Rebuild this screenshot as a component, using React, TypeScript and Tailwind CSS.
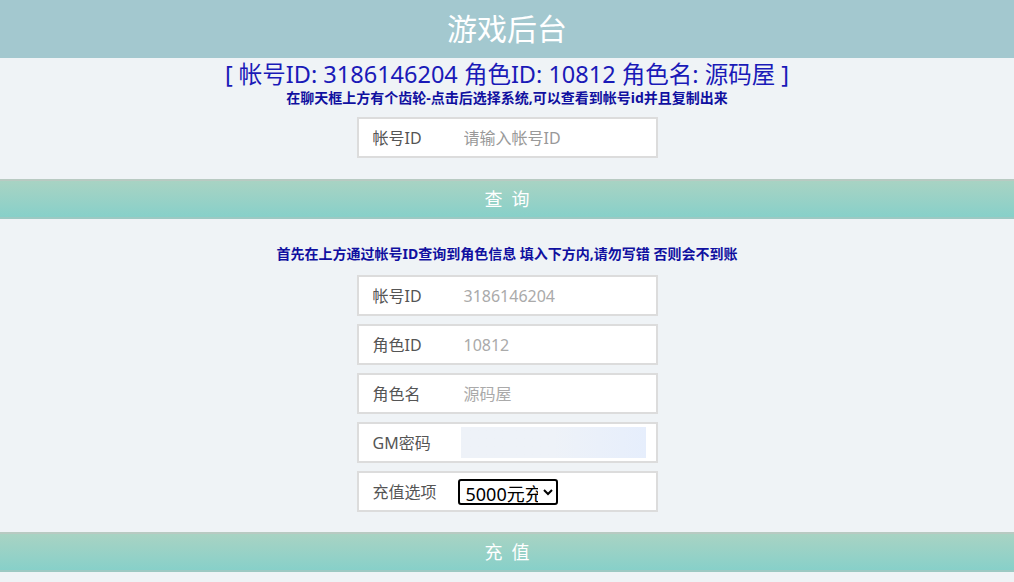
import React, { useState } from 'react';

const font = { fontFamily: '"Noto Sans", "Noto Sans CJK SC", sans-serif' };

const Field: React.FC<{ label: string; children: React.ReactNode }> = ({ label, children }) => (
  <div className="w-[301px] h-[41px] mx-auto bg-white border-2 border-[#dcdcdc] flex items-center">
    <span className="w-[105px] pl-[14px] text-[16px] text-[#555]">{label}</span>
    <div className="flex-1 flex items-center h-full">{children}</div>
  </div>
);

const Band: React.FC<{ text: string }> = ({ text }) => (
  <button className="w-full h-[40px] border-t-2 border-b-2 border-t-[#b8cac2] border-b-[#9cc9c3] bg-gradient-to-b from-[#a8d3c3] to-[#87d0c9] text-white text-[18px] tracking-[0.5em] pl-[0.5em]">
    {text}
  </button>
);

const App: React.FC = () => {
  const [account, setAccount] = useState('');
  const [option, setOption] = useState('5000');

  return (
    <div className="min-h-[582px] bg-[#eff3f6]" style={font}>
      <div className="h-[58px] bg-[#a3c8cf] flex items-center justify-center">
        <h1 className="text-white text-[30px] leading-none">游戏后台</h1>
      </div>

      <div className="text-center text-[#1a1ab8] pt-[2px]">
        <p className="text-[23.5px] leading-[28px]">[ 帐号ID: 3186146204 角色ID: 10812 角色名: 源码屋 ]</p>
        <p className="text-[14px] font-bold leading-[20px] text-[#1010a0]">在聊天框上方有个齿轮-点击后选择系统,可以查看到帐号id并且复制出来</p>
      </div>

      <div className="mt-[9px]">
        <Field label="帐号ID">
          <input
            value={account}
            onChange={e => setAccount(e.target.value)}
            placeholder="请输入帐号ID"
            className="w-full outline-none text-[16px] text-[#555] placeholder:text-[#999]"
          />
        </Field>
      </div>

      <div className="mt-[21px]">
        <Band text="查询" />
      </div>

      <p className="mt-[25px] text-center text-[14px] font-bold text-[#1010a0] leading-[20px]">
        首先在上方通过帐号ID查询到角色信息 填入下方内,请勿写错 否则会不到账
      </p>

      <div className="mt-[11px] flex flex-col gap-[8px]">
        <Field label="帐号ID">
          <span className="text-[16px] text-[#aaa]">3186146204</span>
        </Field>
        <Field label="角色ID">
          <span className="text-[16px] text-[#aaa]">10812</span>
        </Field>
        <Field label="角色名">
          <span className="text-[16px] text-[#aaa]">源码屋</span>
        </Field>
        <Field label="GM密码">
          <input type="password" className="w-[185px] h-[31px] -ml-[3px] bg-gradient-to-r from-[#eef2f8] via-[#eef2f8] to-[#e6eefc] outline-none" />
        </Field>
        <Field label="充值选项">
          <select
            value={option}
            onChange={e => setOption(e.target.value)}
            className="-ml-[6px] w-[100px] h-[26px] border-2 border-black rounded-[3px] text-[18px] text-black bg-white leading-none px-[2px]"
          >
            <option value="5000">5000元充值</option>
            <option value="1000">1000元充值</option>
            <option value="500">500元充值</option>
          </select>
        </Field>
      </div>

      <div className="mt-[20px]">
        <Band text="充值" />
      </div>
    </div>
  );
};

export default App;
